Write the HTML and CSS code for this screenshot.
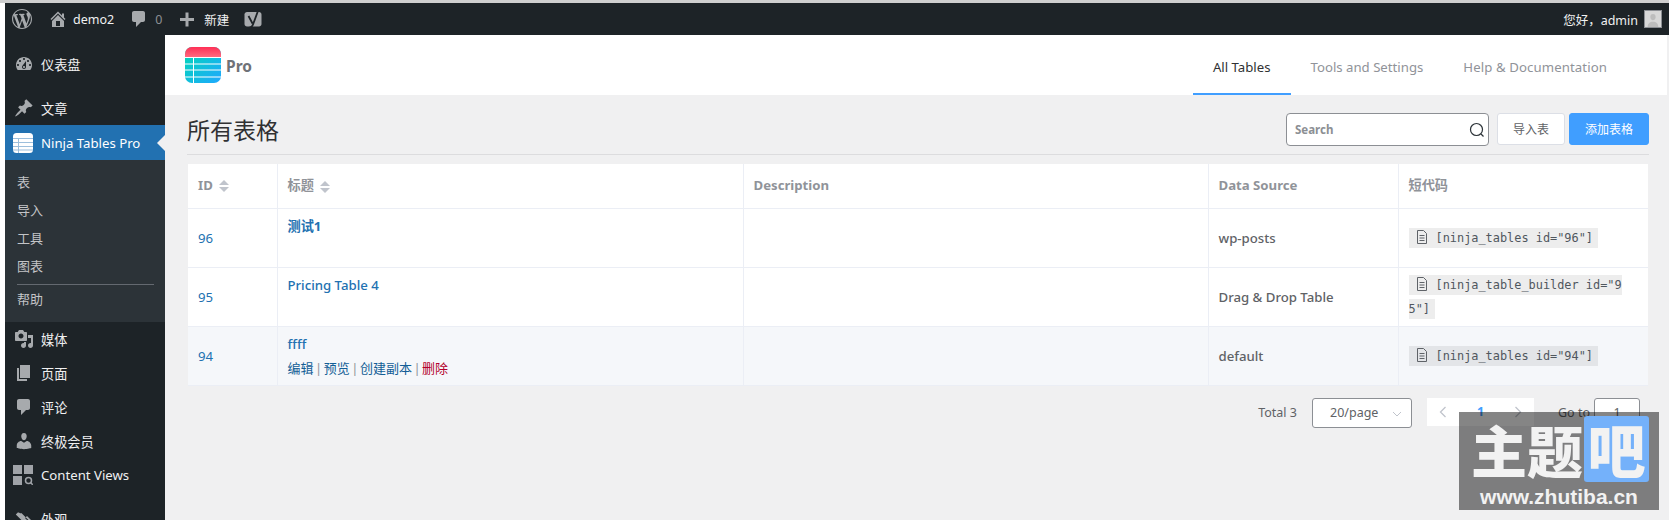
FILE: index.html
```html
<!DOCTYPE html>
<html lang="zh-CN">
<head>
<meta charset="utf-8">
<title>Ninja Tables Pro</title>
<link rel="stylesheet" href="styles.css">
</head>
<body>
<div class="page">
  <header class="adminbar">
    <a class="ab-item ab-wp"><svg class="ab-icon-lg" viewBox="0 0 20 20"><path d="M20 10c0-5.51-4.49-10-10-10C4.48 0 0 4.49 0 10c0 5.52 4.48 10 10 10 5.51 0 10-4.48 10-10zM7.78 15.37L4.37 6.22c.55-.02 1.17-.08 1.17-.08.5-.06.44-1.13-.06-1.11 0 0-1.45.11-2.37.11-.18 0-.37 0-.58-.01C4.12 2.69 6.87 1.11 10 1.11c2.33 0 4.45.87 6.05 2.34-.68-.11-1.65.39-1.65 1.58 0 .74.45 1.36.9 2.1.35.61.55 1.36.55 2.46 0 1.49-1.4 5-1.4 5l-3.03-8.37c.54-.02.82-.17.82-.17.5-.05.44-1.25-.06-1.22 0 0-1.44.12-2.38.12-.87 0-2.33-.12-2.33-.12-.5-.03-.56 1.2-.06 1.22l.92.08 1.26 3.41zM17.41 10c.24-.64.74-1.87.43-4.25.7 1.29 1.05 2.71 1.05 4.25 0 3.29-1.73 6.24-4.4 7.78.97-2.59 1.94-5.2 2.92-7.78zM6.1 18.09C3.12 16.65 1.11 13.53 1.11 10c0-1.3.23-2.48.72-3.59C3.25 10.3 4.67 14.2 6.1 18.09zm4.03-6.63l2.58 6.98c-.86.29-1.76.45-2.71.45-.79 0-1.57-.11-2.29-.33.81-2.38 1.62-4.74 2.42-7.1z"/></svg></a>
    <a class="ab-item ab-home"><svg class="ab-icon" viewBox="0 0 20 20"><path d="M16 8.5l1.53 1.53-1.06 1.06L10 4.62l-6.47 6.47-1.06-1.06L10 2.5l4 4v-2h2v4zm-6-2.46l6 5.99V18H4v-5.97zM12 17v-5H8v5h4z"/></svg><span>demo2</span></a>
    <a class="ab-item ab-comments"><svg class="ab-icon" viewBox="0 0 20 20"><path d="M5 2h9c1.1 0 2 .9 2 2v7c0 1.1-.9 2-2 2h-2l-5 5v-5H5c-1.1 0-2-.9-2-2V4c0-1.1.9-2 2-2z"/></svg><span class="muted">0</span></a>
    <a class="ab-item ab-new"><svg class="ab-icon" viewBox="0 0 20 20"><path d="M17 9v3h-5.5v5.5h-3V12H3V9h5.5V3.500h3V9z"/></svg><span>新建</span></a>
    <a class="ab-item ab-yoast"><svg class="ab-yoast-icon" viewBox="0 0 18 20"><path class="yoast-bg" d="M3 3h12c1.400 0 2.500 1.100 2.500 2.500V15c0 1.400-1.100 2.500-2.500 2.500H3C1.600 17.500.5 16.400.5 15V5.500C.5 4.100 1.600 3 3 3z"/><path class="yoast-y" d="M4.500 7l4 7.500M14.500 0.500L9 15.500C8.300 17.500 7 19 4.500 19.200"/></svg></a>
    <a class="ab-item ab-user"><span>您好，admin</span><span class="avatar"><svg viewBox="0 0 18 18"><path d="M9 3.500c2 0 3 1.500 3 3.300 0 2-1.300 3.700-3 3.700S6 8.800 6 6.800C6 5 7 3.500 9 3.500zM3 18c0-4 2.500-6 6-6s6 2 6 6z"/></svg></span></a>
  </header>
  <div class="layout">
    <nav class="sidebar">
      <a class="menu-item menu-gap"><svg class="menu-icon" viewBox="0 0 20 20"><path d="M3.760 16h12.480c1.100-1.370 1.760-3.110 1.760-5 0-4.420-3.580-8-8-8s-8 3.580-8 8c0 1.890.66 3.630 1.760 5zM10 4c.55 0 1 .45 1 1s-.45 1-1 1-1-.45-1-1 .45-1 1-1zM6 6c.55 0 1 .45 1 1s-.45 1-1 1-1-.45-1-1 .45-1 1-1zm8 0c.55 0 1 .45 1 1s-.45 1-1 1-1-.45-1-1 .45-1 1-1zm-5.370 5.550L12 7v6c0 1.100-.9 2-2 2s-2-.9-2-2c0-.57.24-1.080.63-1.450zM4 10c.55 0 1 .45 1 1s-.45 1-1 1-1-.45-1-1 .45-1 1-1zm12 0c.55 0 1 .45 1 1s-.45 1-1 1-1-.45-1-1 .45-1 1-1zm-5 3c0-.55-.45-1-1-1s-1 .45-1 1 .45 1 1 1 1-.45 1-1z"/></svg><span>仪表盘</span></a>
      <a class="menu-item"><svg class="menu-icon" viewBox="0 0 20 20"><path d="M10.440 3.020l1.820-1.820 6.360 6.350-1.830 1.820c-1.050-.68-2.480-.57-3.410.36l-.75.75c-.92.93-1.040 2.350-.35 3.410l-1.830 1.820-2.410-2.410-2.800 2.790c-.42.42-3.380 2.710-3.800 2.290s1.860-3.390 2.280-3.810l2.790-2.790L4.100 9.360l1.830-1.820c1.050.69 2.480.57 3.400-.36l.75-.75c.93-.92 1.050-2.350.36-3.410z"/></svg><span>文章</span></a>
      <a class="menu-item menu-active"><svg class="ninja-icon" viewBox="0 0 20 20"><rect width="20" height="20" rx="3.500" fill="#fff"/><path d="M0 5.500h20M0 9.500h20M0 13.500h20M0 17h20M5.500 5.500V20" stroke="#9dbfdc" stroke-width="1" fill="none"/></svg><span>Ninja Tables Pro</span></a>
      <ul class="submenu">
        <li>表</li>
        <li>导入</li>
        <li>工具</li>
        <li>图表</li>
        <li class="sub-sep"></li>
        <li>帮助</li>
      </ul>
      <a class="menu-item"><svg class="menu-icon" viewBox="0 0 20 20"><path d="M13 11V4c0-.55-.45-1-1-1h-1.670L9 1H5L3.670 3H2c-.55 0-1 .45-1 1v7c0 .55.45 1 1 1h10c.55 0 1-.45 1-1zM7 4.500c1.380 0 2.500 1.120 2.500 2.500S8.380 9.500 7 9.500 4.500 8.380 4.500 7 5.620 4.500 7 4.500zM14 6h5v10.500c0 1.380-1.120 2.500-2.500 2.500S14 17.880 14 16.500s1.120-2.500 2.500-2.500c.17 0 .34.02.5.05V9h-3V6zm-4 8.050V13h2v3.500c0 1.380-1.120 2.500-2.500 2.500S7 17.880 7 16.500 8.120 14 9.500 14c.17 0 .34.02.5.05z"/></svg><span>媒体</span></a>
      <a class="menu-item"><svg class="menu-icon" viewBox="0 0 20 20"><path d="M6 15V2h10v13H6zm-1 1h8v2H3V5h2v11z"/></svg><span>页面</span></a>
      <a class="menu-item"><svg class="menu-icon" viewBox="0 0 20 20"><path d="M5 2h9c1.100 0 2 .9 2 2v7c0 1.100-.9 2-2 2h-2l-5 5v-5H5c-1.100 0-2-.9-2-2V4c0-1.100.9-2 2-2z"/></svg><span>评论</span></a>
      <a class="menu-item"><svg class="menu-icon" viewBox="0 0 20 20"><path d="M10 9.250c-2.270 0-2.730-3.440-2.730-3.440C7 4.020 7.820 2 9.970 2c2.160 0 2.980 2.020 2.710 3.810 0 0-.41 3.440-2.680 3.440zm0 2.570L12.720 10c2.390 0 4.520 2.330 4.520 4.530v2.490s-3.650 1.130-7.240 1.130c-3.650 0-7.240-1.130-7.240-1.130v-2.490c0-2.250 1.940-4.480 4.470-4.480z"/></svg><span>终极会员</span></a>
      <a class="menu-item menu-gap menu-views"><svg class="views-icon" viewBox="0 0 20 20"><path d="M0 0h9v9H0zM11 0h9v9h-9zM0 11h9v9H0z"/><circle cx="15.500" cy="15.500" r="3" fill="none" stroke="#a0a3a8" stroke-width="1.500"/><path d="M17.500 17.500l2.300 2.300" stroke="#a0a3a8" stroke-width="1.500"/></svg><span>Content Views</span></a>
      <a class="menu-item"><svg class="menu-icon" viewBox="0 0 20 20"><path d="M14.480 11.060L7.410 3.970s-.7.710-1.770 0c-1.100-.7-2.100-.3-2.100-.3L1.800 5.400l7.070 7.080zM16 14l-5-5 2-2 5 5z"/></svg><span>外观</span></a>
    </nav>
    <main class="main">
      <div class="topnav">
        <div class="brand">
          <svg class="brand-logo" viewBox="0 0 36 36">
            <defs>
              <linearGradient id="logoTop" x1="0" y1="0" x2="0" y2="1"><stop offset="0" stop-color="#ff2f55"/><stop offset="1" stop-color="#ff6a7f"/></linearGradient>
              <linearGradient id="logoBody" x1="0" y1="0" x2="1" y2="1"><stop offset="0" stop-color="#00d9b5"/><stop offset="1" stop-color="#1fa8ff"/></linearGradient>
              <clipPath id="logoClip"><rect width="36" height="36" rx="7"/></clipPath>
            </defs>
            <g clip-path="url(#logoClip)">
              <rect width="36" height="36" fill="url(#logoBody)"/>
              <rect width="36" height="10" fill="url(#logoTop)"/>
              <path d="M0 10.500h36M0 17h36M0 23h36M0 30h36M8.500 10.500V36" stroke="#fff" stroke-width="1" fill="none"/>
            </g>
          </svg>
          <span class="brand-name">Pro</span>
        </div>
        <div class="tabs">
          <a class="tab tab-active">All Tables</a>
          <a class="tab">Tools and Settings</a>
          <a class="tab tab-help">Help &amp; Documentation</a>
        </div>
      </div>
      <div class="content">
        <div class="toolbar">
          <h1>所有表格</h1>
          <div class="actions">
            <label class="search"><span class="search-text">Search</span><svg class="search-icon" viewBox="0 0 16 16"><circle cx="7.500" cy="7.500" r="6" fill="none" stroke="#2c3338" stroke-width="1.200"/><path d="M12 12l2.500 2.500" stroke="#2c3338" stroke-width="1.200"/></svg></label>
            <button class="btn">导入表</button>
            <button class="btn btn-primary">添加表格</button>
          </div>
        </div>
        <table class="grid">
          <colgroup><col class="c-id"><col class="c-title"><col class="c-desc"><col class="c-src"><col class="c-code"></colgroup>
          <thead>
            <tr>
              <th>ID<span class="sort"><i class="up"></i><i class="down"></i></span></th>
              <th>标题<span class="sort"><i class="up"></i><i class="down"></i></span></th>
              <th>Description</th>
              <th>Data Source</th>
              <th>短代码</th>
            </tr>
          </thead>
          <tbody>
            <tr>
              <td class="id">96</td>
              <td class="title"><a class="title-link title-cjk">测试1</a></td>
              <td></td>
              <td class="src">wp-posts</td>
              <td><code><svg class="doc" viewBox="0 0 12 14"><path d="M1.500.5h6l3 3v10h-9zM3.500 5.500h5M3.500 8h5M3.500 10.500h5" fill="none" stroke="#5f6368"/></svg>[ninja_tables id="96"]</code></td>
            </tr>
            <tr>
              <td class="id">95</td>
              <td class="title"><a class="title-link">Pricing Table 4</a></td>
              <td></td>
              <td class="src">Drag &amp; Drop Table</td>
              <td><code><svg class="doc" viewBox="0 0 12 14"><path d="M1.500.5h6l3 3v10h-9zM3.500 5.500h5M3.500 8h5M3.500 10.500h5" fill="none" stroke="#5f6368"/></svg>[ninja_table_builder id="95"]</code></td>
            </tr>
            <tr class="hover">
              <td class="id">94</td>
              <td class="title"><a class="title-link">ffff</a>
                <div class="row-actions"><a>编辑</a><span class="bar">|</span><a>预览</a><span class="bar">|</span><a>创建副本</a><span class="bar">|</span><a class="del">删除</a></div>
              </td>
              <td></td>
              <td class="src">default</td>
              <td><code><svg class="doc" viewBox="0 0 12 14"><path d="M1.500.5h6l3 3v10h-9zM3.500 5.500h5M3.500 8h5M3.500 10.500h5" fill="none" stroke="#5f6368"/></svg>[ninja_tables id="94"]</code></td>
            </tr>
          </tbody>
        </table>
        <div class="pagination">
          <span class="total">Total 3</span>
          <span class="select">20/page<svg class="chev" viewBox="0 0 10 6"><path d="M1 1l4 4 4-4" fill="none" stroke="#c0c4cc"/></svg></span>
          <span class="pager">
            <svg class="arrow" viewBox="0 0 8 12"><path d="M6.500 1L1.500 6l5 5" fill="none" stroke="#c0c4cc" stroke-width="1.300"/></svg>
            <b class="current">1</b>
            <svg class="arrow" viewBox="0 0 8 12"><path d="M1.500 1l5 5-5 5" fill="none" stroke="#c0c4cc" stroke-width="1.300"/></svg>
          </span>
          <span class="goto">Go to</span>
          <span class="goto-input">1</span>
        </div>
      </div>
    </main>
  </div>
  <div class="watermark">
    <div class="wm-top"><span class="wm-main">主题</span><span class="wm-box">吧</span></div>
    <div class="wm-url">www.zhutiba.cn</div>
  </div>
</div>
</body>
</html>
```
FILE: styles.css
```css
* { box-sizing: border-box; }
html, body { margin: 0; padding: 0; height: 520px; overflow: hidden; background: #fff; }
body { font-family: "Noto Sans", "Noto Sans CJK SC", sans-serif; font-size: 12.500px; color: #606266; }
a { text-decoration: none; color: inherit; }

.page { position: relative; width: 1669px; height: 520px; overflow: hidden; padding-left: 5px; border-top: 3px solid #cfcfcf; background: #fff; }

/* admin bar */
.adminbar { display: flex; align-items: center; height: 32px; background: #1d2327; color: #f0f0f1; }
.ab-item { display: flex; align-items: center; height: 32px; }
.ab-icon-lg { width: 20px; height: 20px; fill: #a7aaad; }
.ab-icon { width: 20px; height: 20px; fill: #a7aaad; }
.ab-wp { margin-left: 7px; }
.ab-home { margin-left: 16px; gap: 5px; }
.ab-comments { margin-left: 15px; gap: 6px; }
.muted { color: #8c8f94; }
.ab-new { margin-left: 15px; gap: 7px; }
.ab-yoast { margin-left: 15px; }
.ab-yoast-icon { width: 18px; height: 20px; }
.yoast-bg { fill: #a7aaad; }
.yoast-y { fill: none; stroke: #1d2327; stroke-width: 1.800; }
.ab-user { margin-left: auto; margin-right: 7px; gap: 6px; }
.avatar { width: 18px; height: 18px; background: #d8d8d8; border: 1px solid #8c8f94; display: flex; }
.avatar svg { width: 16px; height: 16px; fill: #bdbdbd; }

.layout { display: flex; height: 485px; }

/* sidebar */
.sidebar { width: 160px; flex: none; background: #1d2327; padding-top: 12px; color: #f0f0f1; font-size: 13.200px; overflow: hidden; }
.menu-item { display: flex; align-items: center; height: 34px; padding-left: 9px; gap: 7px; }
.menu-gap { margin-bottom: 10px; }
.menu-icon { width: 20px; height: 20px; fill: #a7aaad; flex: none; }
.menu-active { position: relative; height: 35px; background: #2271b1; color: #fff; padding-left: 8px; gap: 8px; }
.menu-active::after { content: ""; position: absolute; right: 0; top: 10px; border: 8px solid transparent; border-right-color: #f0f0f1; border-left: 0; }
.ninja-icon { width: 20px; height: 20px; flex: none; }
.menu-views { padding-left: 8px; gap: 8px; }
.views-icon { width: 20px; height: 20px; fill: #a0a3a8; flex: none; }

.submenu { list-style: none; margin: 0; padding: 8px 0 9px 12px; background: #2c3338; color: #c3c4c7; font-size: 13px; }
.submenu li { height: 28px; line-height: 28px; }
.sub-sep { height: 1px !important; margin: 4px 11px 0 0; background: #646970; }

/* main */
.main { flex: 1; min-width: 0; background: #f0f0f1; }
.topnav { display: flex; justify-content: space-between; height: 60px; margin-right: 2px; background: #fff; padding-left: 20px; }
.brand { display: flex; align-items: center; gap: 5px; }
.brand-logo { width: 36px; height: 36px; }
.brand-name { font-size: 15.500px; font-weight: 700; color: #6f7278; margin-top: 2px; }
.tabs { display: flex; padding-right: 40px; }
.tab { display: flex; align-items: center; padding: 5px 20px 0; font-size: 13.200px; color: #909399; border-bottom: 2px solid transparent; }
.tab-help { letter-spacing: .1px; }
.tab-active { color: #303133; border-bottom-color: #409eff; }

.content { padding: 0 20px 0 22px; }
.toolbar { display: flex; justify-content: space-between; align-items: center; height: 60px; border-bottom: 1px solid #dcdcde; padding-top: 9px; }
h1 { margin: 0; font-size: 23px; font-weight: 400; color: #303133; }
.actions { display: flex; align-items: center; gap: 8px; }
.search { display: flex; align-items: center; justify-content: space-between; width: 203px; height: 33px; padding: 1px 3px 0 8px; background: #fff; border: 1px solid #8c8f94; border-radius: 4px; font-size: 11.500px; font-weight: 700; color: #8c8f94; }
.search-icon { width: 16px; height: 16px; margin-top: 1px; }
.btn { height: 32px; width: 68px; padding: 0; background: #fff; border: 1px solid #dcdfe6; border-radius: 3px; font: 12px "Noto Sans", "Noto Sans CJK SC", sans-serif; color: #606266; }
.btn-primary { width: 80px; margin-left: -4px; background: #409eff; border-color: #409eff; color: #fff; }

/* table */
.grid { width: 1460px; margin: 9px 0 0 1px; border-collapse: collapse; table-layout: fixed; background: #fff; font-size: 13.200px; }
.c-id { width: 89px; }
.c-title { width: 466px; }
.c-desc { width: 465px; }
.c-src { width: 190px; }
.c-code { width: 250px; }
.grid th, .grid td { border: 0 solid #ebeef5; border-bottom-width: 1px; padding: 0 10px; text-align: left; vertical-align: middle; }
.grid th + th, .grid td + td { border-left-width: 1px; }
.grid th { height: 44px; padding-bottom: 2px; font-size: 13.200px; font-weight: 700; color: #909399; }
.grid td { height: 59px; }
.id { color: #2271b1; }
.grid td.title { vertical-align: top; padding-top: 6px; }
.title-link { display: block; line-height: 22px; color: #2271b1; font-weight: 500; font-size: 13.200px; }
.title-cjk { font-weight: 700; }
.row-actions { margin-top: 3px; line-height: 20px; font-size: 13px; color: #909399; }
.row-actions a { color: #135e96; }
.row-actions .del { color: #b3002d; }
.bar { margin: 0 1.500px; }
.src { font-weight: 500; font-size: 13.200px; color: #606266; }
.hover td { background: #f5f7fa; }
code { font-family: "DejaVu Sans Mono", "Liberation Mono", monospace; font-size: 11.900px; line-height: 24px; background: rgba(0,0,0,.07); padding: 3px 5px; word-break: break-all; color: #50575e; }
td:last-child { padding-right: 20px; }
.doc { width: 12px; height: 14px; margin: 0 8px 0 2px; vertical-align: -2px; }
.sort { display: inline-flex; flex-direction: column; gap: 2px; margin-left: 6px; vertical-align: middle; }
.sort i { display: block; width: 0; height: 0; border: 5px solid transparent; }
.sort .up { border-top: 0; border-bottom: 5px solid #c0c4cc; }
.sort .down { border-bottom: 0; border-top: 5px solid #c0c4cc; }

/* pagination */
.pagination { display: flex; align-items: center; justify-content: flex-end; height: 30px; margin-top: 12px; padding-right: 9px; font-size: 12.500px; }
.total { margin-right: 15px; color: #606266; }
.select { position: relative; display: flex; align-items: center; width: 100px; height: 30px; padding-left: 17px; background: #fff; border: 1px solid #8c8f94; border-radius: 3px; color: #606266; }
.chev { position: absolute; right: 9px; top: 12px; width: 10px; height: 6px; }
.pager { display: flex; align-items: center; justify-content: space-between; width: 107px; height: 28px; margin: 0 24px 0 15px; padding: 0 12px; background: #fff; align-self: flex-start; }
.arrow { width: 8px; height: 12px; }
.current { color: #409eff; font-weight: 700; }
.goto { margin-right: 4px; }
.goto-input { display: flex; align-items: center; justify-content: center; width: 46px; height: 30px; border: 1px solid #8c8f94; border-radius: 3px; background: #fff; }

/* watermark */
.watermark { position: absolute; left: 1459px; top: 409px; width: 200px; height: 98px; background: rgba(0,0,0,.48); color: #f2f2f2; }
.wm-top { display: flex; align-items: flex-start; padding: 4px 0 0 12px; height: 70px; }
.wm-main { font-family: "Noto Sans CJK SC", sans-serif; font-weight: 900; font-size: 56px; line-height: 66px; }
.wm-box { width: 65px; height: 66px; margin-left: 1px; border-radius: 3px; background: #74b1fa; font-family: "Noto Sans CJK SC", sans-serif; font-weight: 900; font-size: 58px; line-height: 64px; text-align: center; }
.wm-url { text-align: center; font-family: "Liberation Sans", sans-serif; font-weight: 700; font-size: 21px; line-height: 24px; margin-top: 3px; }
```
